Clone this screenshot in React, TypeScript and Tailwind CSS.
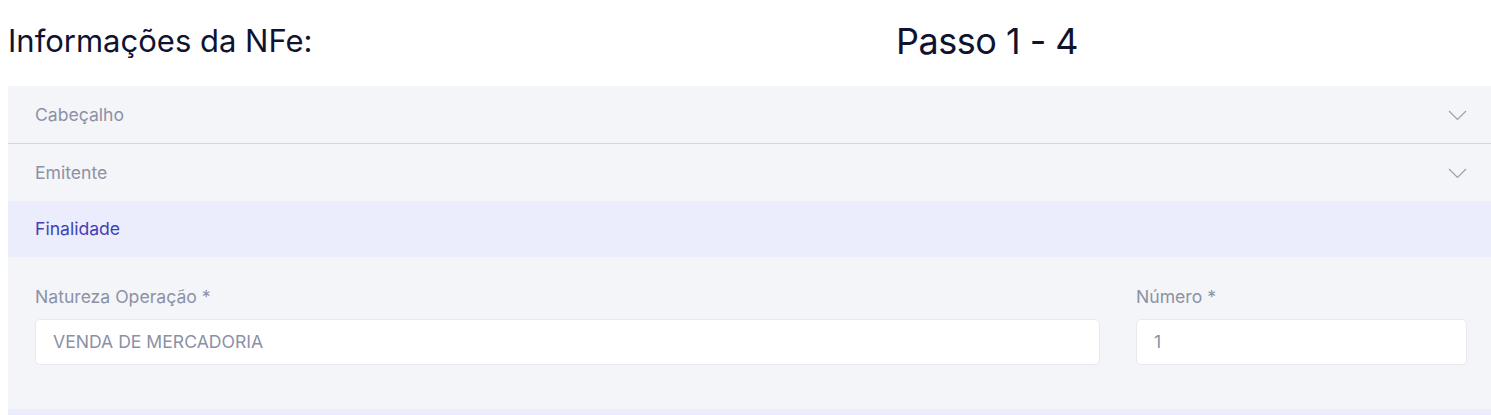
import React from "react";

function Chevron() {
  return (
    <svg width="19" height="11" viewBox="0 0 19 11" fill="none" className="shrink-0">
      <path d="M1 1L9.5 9.5L18 1" stroke="#9aa0b4" strokeWidth="1.2" />
    </svg>
  );
}

export default function App() {
  return (
    <div className="min-h-screen bg-white" style={{ fontFamily: "Inter, 'Noto Sans', sans-serif" }}>
      <div className="flex items-center h-[86px] pl-2 pb-[5px]">
        <h1 className="text-[31px] text-[#0f1330] font-normal w-[888px] leading-none">Informações da NFe:</h1>
        <h2 className="text-[36px] text-[#0f1330] font-normal tracking-[-0.5px] leading-none">Passo 1 - 4</h2>
      </div>
      <div className="ml-2 bg-[#f4f5f9]">
        <div className="flex items-center justify-between h-[58px] pl-[27px] pr-[24px] pt-[2px] border-b border-[#d4d6dc]">
          <span className="text-[17.6px] text-[#8c91a5]">Cabeçalho</span>
          <Chevron />
        </div>
        <div className="flex items-center justify-between h-[57px] pl-[27px] pr-[24px] pt-[2px]">
          <span className="text-[17.6px] text-[#8c91a5]">Emitente</span>
          <Chevron />
        </div>
        <div className="flex items-center h-[56px] pl-[27px] pr-[24px] bg-[#ecedfc]">
          <span className="text-[17.6px] text-[#4040b8]">Finalidade</span>
        </div>
        <div className="pl-[27px] pr-[24px] pt-[30px] pb-[44px]">
          <div className="grid grid-cols-12 gap-x-9">
            <div className="col-span-9 flex flex-col">
              <label className="text-[17.6px] text-[#8c91a5] leading-5 mb-[12px]">Natureza Operação *</label>
              <div className="h-[46px] bg-white border border-[#e8e9ee] rounded-[5px] flex items-center pl-[17px] text-[17.6px] text-[#8c91a5]">
                VENDA DE MERCADORIA
              </div>
            </div>
            <div className="col-span-3 flex flex-col">
              <label className="text-[17.6px] text-[#8c91a5] leading-5 mb-[12px]">Número *</label>
              <div className="h-[46px] bg-white border border-[#e8e9ee] rounded-[5px] flex items-center pl-[17px] text-[17.6px] text-[#8c91a5]">
                1
              </div>
            </div>
          </div>
        </div>
        <div className="h-[20px] bg-[#ecedfc]" />
      </div>
    </div>
  );
}
